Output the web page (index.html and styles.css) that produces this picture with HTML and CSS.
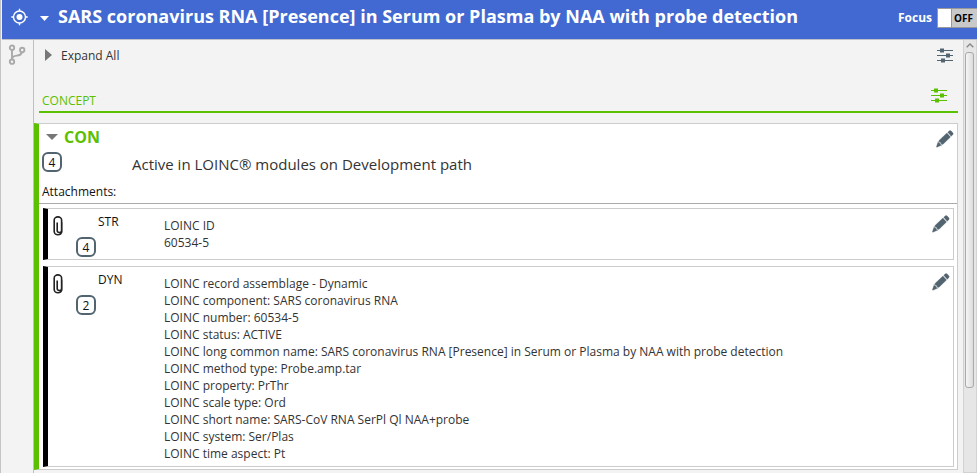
FILE: index.html
```
<!DOCTYPE html>
<html lang="en">
<head>
<meta charset="utf-8">
<title>Concept details</title>
<link rel="stylesheet" href="styles.css">
</head>
<body>
<svg class="defs" width="0" height="0">
  <symbol id="pencil" viewBox="0 0 18 18">
    <path d="M11.7 2.2 13.5.7Q14.4 0 15.2.9L17 3Q17.6 3.9 16.8 4.7L15.2 6.2ZM10.9 3 14.5 7 6.8 14.4 5.3 14.1 4.9 12.6 3.3 12.2 3 10.5ZM2.3 11.3 2.5 12.9 4.2 13.3 4.6 14.8 5.9 15.1.8 17.3.4 16.8Z" fill="#52646f" stroke="#52646f" stroke-width=".3"/>
  </symbol>
  <symbol id="sliders" viewBox="0 0 16 15">
    <path d="M0 2.5h16M0 7.5h16M0 12.5h16" stroke="currentColor" stroke-width="1.1"/>
    <path d="M3 .5h4v4H3zM9 5.5h4v4H9zM4 10.5h4v4H4z" fill="currentColor"/>
  </symbol>
  <symbol id="clip" viewBox="0 0 10 20">
    <path d="M8.8 6V15.5a3.8 3.3 0 0 1-7.6 0V4a3.7 3.1 0 0 1 7.4 0V14.5a2.2 2 0 0 1-4.4 0V6.5" fill="none" stroke="#222" stroke-width="1.6"/>
  </symbol>
</svg>
<header class="header">
  <svg class="target" width="17" height="18" viewBox="0 0 17 18"><g fill="none" stroke="#fff" stroke-width="1.4"><circle cx="8.5" cy="9" r="6"/><path d="M8.5.8v2.5M8.5 14.7v2.5M.3 9h2.5M14.2 9h2.5"/></g><circle cx="8.5" cy="9" r="3" fill="#fff"/></svg>
  <svg class="caret" width="9" height="5" viewBox="0 0 9 5"><path d="M0 0h9L4.5 5z" fill="#fff"/></svg>
  <h1 class="title"><span>SARS coronavirus RNA [Presence] in Serum or Plasma by NAA with probe detection</span></h1>
  <span class="focus">Focus</span>
  <span class="toggle"><i class="knob"></i><b class="state">OFF</b></span>
</header>
<div class="body">
  <aside class="side">
    <svg width="18" height="21" viewBox="0 0 18 21"><g fill="none" stroke="#aaa" stroke-width="1.9"><circle cx="4" cy="3.7" r="2.2"/><circle cx="4" cy="17.7" r="2.2"/><circle cx="14.2" cy="6" r="2.2"/><path d="M4 6v9.5M13.8 8c-.4 3-2 3.4-5 3.6-2.8.2-4.5.7-4.6 3.1"/></g></svg>
  </aside>
  <main class="main">
    <div class="toolbar">
      <svg class="arrow" width="7" height="12" viewBox="0 0 7 12"><path d="M0 0 7 6 0 12z" fill="#777"/></svg>
      <span class="expand">Expand All</span>
      <svg class="sliders" width="16" height="15"><use href="#sliders"/></svg>
    </div>
    <div class="section">
      <span class="section-name">CONCEPT</span>
      <svg class="sliders green" width="16" height="15"><use href="#sliders"/></svg>
    </div>
    <section class="card">
      <div class="card-head">
        <svg class="open" width="12" height="6" viewBox="0 0 12 6"><path d="M0 0h12L6 6z" fill="#777"/></svg>
        <h2 class="con">CON</h2>
        <svg class="edit" width="18" height="18"><use href="#pencil"/></svg>
      </div>
      <div class="status"><span class="badge">4</span><span class="active">Active in LOINC® modules on Development path</span></div>
      <div class="attachments"><span>Attachments:</span></div>
      <article class="item str">
        <svg class="clip" width="10" height="20"><use href="#clip"/></svg>
        <div class="kind"><span class="kind-name">STR</span><span class="badge">4</span></div>
        <div class="lines"><p>LOINC ID</p><p>60534-5</p></div>
        <svg class="edit" width="18" height="18"><use href="#pencil"/></svg>
      </article>
      <article class="item dyn">
        <svg class="clip" width="10" height="20"><use href="#clip"/></svg>
        <div class="kind"><span class="kind-name">DYN</span><span class="badge">2</span></div>
        <div class="lines">
          <p>LOINC record assemblage - Dynamic</p>
          <p>LOINC component: SARS coronavirus RNA</p>
          <p>LOINC number: 60534-5</p>
          <p>LOINC status: ACTIVE</p>
          <p>LOINC long common name: SARS coronavirus RNA [Presence] in Serum or Plasma by NAA with probe detection</p>
          <p>LOINC method type: Probe.amp.tar</p>
          <p>LOINC property: PrThr</p>
          <p>LOINC scale type: Ord</p>
          <p>LOINC short name: SARS-CoV RNA SerPl Ql NAA+probe</p>
          <p>LOINC system: Ser/Plas</p>
          <p>LOINC time aspect: Pt</p>
        </div>
        <svg class="edit" width="18" height="18"><use href="#pencil"/></svg>
      </article>
    </section>
  </main>
  <div class="scrollbar">
    <svg class="up" width="8" height="5" viewBox="0 0 8 5"><path d="M.7 4.3 4 1l3.3 3.3" fill="none" stroke="#888" stroke-width="1.4"/></svg>
    <div class="thumb"></div>
  </div>
</div>
</body>
</html>
```
FILE: styles.css
```
* { box-sizing: border-box; }
body {
  margin: 0;
  width: 977px;
  height: 473px;
  overflow: hidden;
  background: #f3f3f3;
  border-left: 1px solid #c4c4c4;
  font: 12px/17px "Open Sans", sans-serif;
  color: #333;
}
h1, h2, p { margin: 0; }
svg { display: block; flex: none; }
.defs { position: absolute; }

.header {
  display: flex;
  align-items: flex-start;
  height: 40px;
  margin-left: 1px;
  background: #4169d1;
  border-bottom: 1px solid #bfc0c8;
  color: #fff;
}
.target { margin: 8px 0 0 9px; }
.caret { margin: 16px 0 0 12px; }
.title { margin: 4px 0 0 9px; width: 840px; font-size: 18px; line-height: 24px; font-weight: 700; white-space: nowrap; }
.focus { margin-top: 9px; width: 39px; font-weight: 700; font-size: 12px; }
.toggle { display: flex; flex: none; width: 40px; height: 20px; margin-top: 8px; border: 1px solid #999; border-right: 0; background: #c9c9c9; }
.knob { width: 14px; background: #fff; border-right: 1px solid #999; }
.state { flex: 1; text-align: center; padding-right: 2px; color: #000; font-size: 10px; line-height: 19px; }

.body { display: flex; height: 433px; }
.side { width: 33px; flex: none; border-right: 1px solid #c0c0c0; padding: 4px 0 0 7px; }
.main { width: 924px; flex: none; }

.toolbar { display: flex; align-items: center; height: 30px; margin-bottom: 2px; padding: 0 5px 0 11px; }
.expand { margin-left: 9px; }
.toolbar .sliders { margin-left: auto; color: #52646f; }
.section { display: flex; margin-left: 5px; height: 41px; border-bottom: 2px solid #5bc000; padding: 16px 11px 0 3px; color: #5bc000; }
.section-name { margin-top: 4px; font-size: 12px; }
.section .sliders { margin-left: auto; }

.card { height: 347px; margin-top: 10px; background: #fff; border: 1px solid #ccc; border-left: 5px solid #5bc000; }
.card-head { display: flex; height: 26px; padding: 0 3px 0 7px; }
.open { margin-top: 10px; }
.con { margin: 2px 0 0 6px; font-size: 16px; line-height: 22px; color: #5bc000; }
.card-head .edit { margin: 6px 0 0 auto; }
.status { display: flex; align-items: flex-start; height: 30px; padding-left: 3px; }
.badge { display: block; width: 20px; height: 20px; border: 2px solid #52646f; border-radius: 6px; line-height: 17px; text-align: center; color: #111; }
.status .badge { margin-top: 2px; }
.active { margin: 4px 0 0 70px; font-size: 15px; line-height: 20px; }
.attachments { height: 24px; padding: 3px 0 0 3px; border-bottom: 1px solid #aaa; color: #111; }

.item { display: flex; margin: 0 3px 6px 4px; border: 1px solid #ccc; border-left: 5px solid #000; }
.str { height: 52px; margin-top: 4px; }
.dyn { height: 201px; margin-bottom: 0; }
.clip { margin: 7px 0 0 5px; }
.kind { width: 101px; padding: 4px 0 0 13px; color: #111; }
.kind-name { display: block; margin-left: 22px; }
.kind .badge { margin-top: 7px; }
.lines { flex: 1; padding-top: 8px; white-space: nowrap; }
.item .edit { margin: 6px 3px 0 0; }

.scrollbar { width: 14px; flex: none; margin-left: 5px; border: 1px solid #d2d2d2; border-top: 0; background: #e6e6e6; }
.up { margin: 3px 0 4px 2px; }
.thumb { width: 9px; height: 336px; margin-left: 1px; border: 1px solid #aaa; border-radius: 3px; background: linear-gradient(90deg, #f5f5f5, #dcdcdc); }
```
